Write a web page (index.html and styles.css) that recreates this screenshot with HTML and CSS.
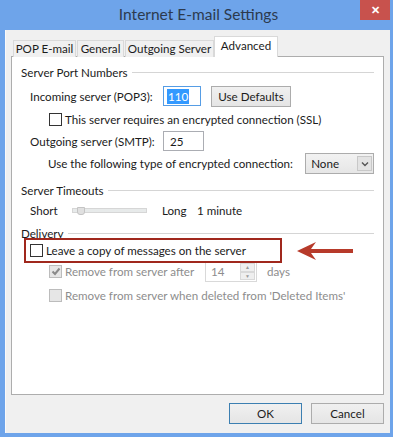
FILE: index.html
```html
<!DOCTYPE html>
<html>
<head>
    <title>Internet E-mail Settings</title>
    <link rel="stylesheet" href="styles.css">
</head>
<body>
    <div class="window">
        <!-- Title bar -->
        <div class="titlebar">
            <span class="title">Internet E-mail Settings</span>
            <span class="close-btn">&#x2715;</span>
        </div>

        <div class="client">
            <!-- Tabs -->
            <div class="tabs">
                <div class="tab tab-pop">POP E-mail</div>
                <div class="tab tab-general">General</div>
                <div class="tab tab-outgoing">Outgoing Server</div>
                <div class="tab active">Advanced</div>
            </div>

            <div class="panel">
                <div class="group-title"><span>Server Port Numbers</span></div>

                <div class="row row-incoming">
                    <span class="field-label">Incoming server (POP3):</span>
                    <span class="textbox focused narrow"><span class="selected">110</span></span>
                    <span class="button use-defaults">Use Defaults</span>
                </div>

                <div class="row row-check">
                    <span class="checkbox"></span>
                    <span>This server requires an encrypted connection (SSL)</span>
                </div>

                <div class="row row-outgoing">
                    <span class="field-label">Outgoing server (SMTP):</span>
                    <span class="textbox wide">25</span>
                </div>

                <div class="row row-encrypt">
                    <span class="encrypt-label">Use the following type of encrypted connection:</span>
                    <span class="select">
                        <span class="select-value">None</span>
                        <span class="select-arrow">
                            <svg width="8" height="6" viewBox="0 0 8 6"><path d="M1 1.5 L4 4.5 L7 1.5" fill="none" stroke="#555" stroke-width="1.4"/></svg>
                        </span>
                    </span>
                </div>

                <div class="group-title timeouts"><span>Server Timeouts</span></div>

                <div class="row row-slider">
                    <span class="short-label">Short</span>
                    <span class="slider">
                        <span class="slider-thumb"></span>
                    </span>
                    <span class="long-label">Long</span>
                    <span>1 minute</span>
                </div>

                <div class="group-title delivery"><span>Delivery</span></div>

                <div class="highlight-row">
                    <span class="checkbox"></span>
                    <span>Leave a copy of messages on the server</span>
                    <!-- annotation arrow -->
                    <svg class="arrow" width="58" height="22" viewBox="0 0 58 22">
                        <path d="M1 11 L20 2 L15 9 L57 9 L57 13 L15 13 L20 20 Z" fill="#b73a2a"/>
                    </svg>
                </div>

                <div class="row row-remove disabled">
                    <span class="checkbox checked">
                        <svg width="10" height="9" viewBox="0 0 10 9"><path d="M1.5 4.5 L4 7 L8.5 1.5" fill="none" stroke="#8a8a8a" stroke-width="2"/></svg>
                    </span>
                    <span class="remove-label">Remove from server after</span>
                    <span class="spinner">
                        <span class="spinner-value">14</span>
                        <span class="spinner-buttons">
                            <span class="spin up">&#9650;</span>
                            <span class="spin down">&#9660;</span>
                        </span>
                    </span>
                    <span class="days">days</span>
                </div>

                <div class="row row-check2 disabled">
                    <span class="checkbox"></span>
                    <span>Remove from server when deleted from 'Deleted Items'</span>
                </div>
            </div>

            <!-- Dialog buttons -->
            <div class="dialog-buttons">
                <span class="button default">OK</span>
                <span class="button">Cancel</span>
            </div>
        </div>
    </div>
</body>
</html>
```

FILE: styles.css
```css
body {
    margin: 0;
    padding: 0;
    background-color: #6ea4ea;
    font-family: 'Lato', 'Open Sans', sans-serif;
    font-size: 11.6px;
    color: #1b1b1b;
    white-space: nowrap;
}

.window {
    width: 393px;
    height: 437px;
    box-sizing: border-box;
    background-color: #6ea4ea; /* Windows 8 blue frame */
    padding: 0 3px 4px 5px;
    display: flex;
    flex-direction: column;
}

.titlebar {
    height: 30px;
    display: flex;
    align-items: flex-start;
    justify-content: center;
    position: relative;
}

.title {
    font-size: 15.5px;
    color: #2c3a4e;
    margin-top: 5px;
    margin-left: 2px;
}

.close-btn {
    position: absolute;
    top: 0;
    right: 0;
    width: 30px;
    height: 20px;
    background-color: #c8524d;
    color: #fff;
    font-size: 11px;
    font-weight: bold;
    display: flex;
    align-items: center;
    justify-content: center;
}

.client {
    flex: 1;
    background-color: #f0f0f0;
    border-left: 1px solid #fafafa;
    padding: 7px 6px 0 5px;
    display: flex;
    flex-direction: column;
}

/* Tabs */
.tabs {
    display: flex;
    align-items: flex-end;
    height: 20px;
    padding-left: 2px;
    position: relative;
    z-index: 1;
}

.tab {
    height: 16px;
    line-height: 16px;
    box-sizing: content-box;
    border: 1px solid #d9d9d9;
    border-bottom: none;
    background-color: #f0f0f0;
    margin-right: 1px;
    text-align: center;
}

.tab-pop {
    width: 61px;
}

.tab-general {
    width: 45px;
}

.tab-outgoing {
    width: 87px;
    margin-right: 0;
}

.tab.active {
    width: 62px;
    height: 20px;
    line-height: 17px;
    background-color: #fff;
    border-color: #d9d9d9;
    margin-right: 0;
}

.panel {
    height: 339px;
    background-color: #fff;
    border: 1px solid #adadad;
    box-sizing: border-box;
    padding: 7px 9px 0 9px;
    margin-top: -1px;
    display: flex;
    flex-direction: column;
}

.group-title {
    display: flex;
    align-items: center;
    height: 16px;
}

.group-title::after {
    content: '';
    flex: 1;
    height: 1px;
    background-color: #d5d5d5;
    margin-left: 4px;
}

.group-title.timeouts {
    margin-top: 8px;
}

.group-title.delivery {
    margin-top: 8px;
    height: 14px;
    margin-bottom: -2px;
}

.row {
    display: flex;
    align-items: center;
    padding-left: 9px;
}

.row-incoming {
    height: 20px;
    margin-top: 6px;
}

.field-label {
    width: 133px;
}

.textbox {
    height: 20px;
    box-sizing: border-box;
    border: 1px solid #abadb3;
    background-color: #fff;
    display: flex;
    align-items: center;
    padding-left: 3px;
}

.textbox.narrow {
    width: 38px;
}

.textbox.wide {
    width: 41px;
    padding-left: 6px;
}

.textbox.focused {
    border-color: #569de5;
}

.selected {
    background-color: #3399ff;
    color: #fff;
    padding: 0 1px;
    line-height: 15px;
}

.button {
    height: 21px;
    box-sizing: border-box;
    border: 1px solid #acacac;
    background: linear-gradient(#f0f0f0, #e5e5e5);
    display: flex;
    align-items: center;
    justify-content: center;
}

.use-defaults {
    width: 80px;
    margin-left: 10px;
}

.row-check {
    height: 18px;
    margin-top: 4px;
    padding-left: 28px;
}

.checkbox {
    width: 13px;
    height: 13px;
    box-sizing: border-box;
    border: 1px solid #333;
    background-color: #fff;
    margin-right: 3px;
    display: flex;
    align-items: center;
    justify-content: center;
}

.row-outgoing {
    height: 20px;
    margin-top: 3px;
}

.row-encrypt {
    height: 21px;
    margin-top: 2px;
    padding-left: 27px;
}

.encrypt-label {
    width: 258px;
}

.select {
    width: 69px;
    height: 21px;
    box-sizing: border-box;
    border: 1px solid #acacac;
    background: linear-gradient(#f2f2f2, #e6e6e6);
    display: flex;
    align-items: center;
    justify-content: space-between;
    padding: 0 1px 0 5px;
}

.select-arrow {
    width: 15px;
    height: 15px;
    box-sizing: border-box;
    border: 1px solid #c8c8c8;
    background-color: #e3e3e3;
    display: flex;
    align-items: center;
    justify-content: center;
}

.row-slider {
    height: 16px;
    margin-top: 4px;
}

.short-label {
    width: 42px;
}

.slider {
    width: 73px;
    height: 3px;
    background-color: #e7eaea;
    border: 1px solid #d6d6d6;
    position: relative;
    margin-right: 15px;
}

.slider-thumb {
    position: absolute;
    left: 4px;
    top: -2px;
    width: 6px;
    height: 6px;
    background-color: #e0e0e0;
    border: 1px solid #c4c4c4;
    border-radius: 0 0 3px 3px;
}

.long-label {
    width: 35px;
}

.highlight-row {
    display: flex;
    align-items: center;
    height: 25px;
    width: 258px;
    box-sizing: border-box;
    border: 2px solid #a0281d;
    margin-left: 3px;
    padding-left: 4px;
    position: relative;
}

.arrow {
    position: absolute;
    left: 270px;
    top: 0px;
}

.disabled {
    color: #8d8d8d;
}

.disabled .checkbox {
    border-color: #bcbcbc;
    background-color: #e6e6e6;
}

.row-remove {
    height: 21px;
    margin-top: -2px;
    padding-left: 28px;
}

.remove-label {
    width: 140px;
}

.spinner {
    width: 52px;
    height: 21px;
    box-sizing: border-box;
    border: 1px solid #d9d9d9;
    background-color: #fff;
    display: flex;
    align-items: center;
    justify-content: space-between;
    padding: 0 1px 0 5px;
}

.spinner-buttons {
    width: 15px;
    height: 17px;
    display: flex;
    flex-direction: column;
}

.spin {
    flex: 1;
    border: 1px solid #d9d9d9;
    background-color: #efefef;
    font-size: 5px;
    line-height: 6px;
    color: #9a9a9a;
    text-align: center;
}

.days {
    margin-left: 10px;
}

.row-check2 {
    height: 18px;
    margin-top: 4px;
    padding-left: 28px;
}

.dialog-buttons {
    display: flex;
    justify-content: flex-end;
    gap: 9px;
    padding-right: 0;
    margin-top: 8px;
}

.dialog-buttons .button {
    width: 73px;
}

.button.default {
    border-color: #3c7fb1;
}
```
